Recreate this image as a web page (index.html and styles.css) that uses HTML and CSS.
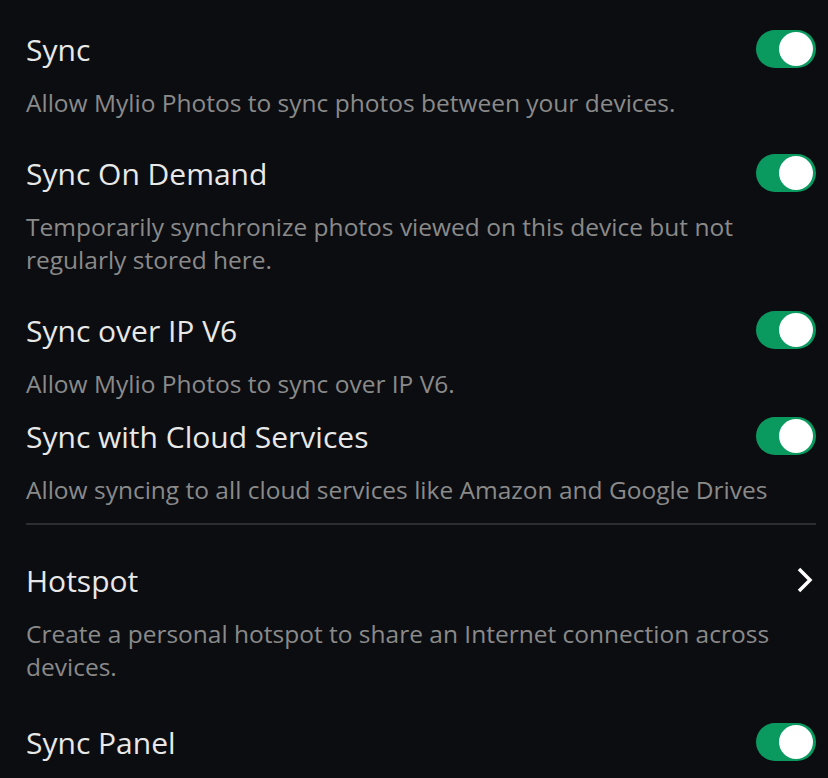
FILE: index.html
```html
<!DOCTYPE html>
<html>
    <head>
        <title>Sync Settings</title>
        <link rel="stylesheet" href="styles.css">
    </head>
    <body>
        <div class="settings">
            <div class="setting">
                <div class="setting-row">
                    <span class="setting-title">Sync</span>
                    <span class="toggle on"><span class="knob"></span></span>
                </div>
                <p class="setting-desc">Allow Mylio Photos to sync photos between your devices.</p>
            </div>

            <div class="setting">
                <div class="setting-row">
                    <span class="setting-title">Sync On Demand</span>
                    <span class="toggle on"><span class="knob"></span></span>
                </div>
                <p class="setting-desc">Temporarily synchronize photos viewed on this device but not regularly stored here.</p>
            </div>

            <div class="setting tight">
                <div class="setting-row">
                    <span class="setting-title">Sync over IP V6</span>
                    <span class="toggle on"><span class="knob"></span></span>
                </div>
                <p class="setting-desc">Allow Mylio Photos to sync over IP V6.</p>
            </div>

            <div class="setting tight">
                <div class="setting-row">
                    <span class="setting-title">Sync with Cloud Services</span>
                    <span class="toggle on"><span class="knob"></span></span>
                </div>
                <p class="setting-desc">Allow syncing to all cloud services like Amazon and Google Drives</p>
            </div>

            <hr class="divider" />

            <div class="setting loose">
                <div class="setting-row">
                    <span class="setting-title">Hotspot</span>
                    <svg class="chevron" width="18" height="26" viewBox="0 0 18 26">
                        <polyline points="3,2 14,13 3,24" fill="none" stroke="#ffffff" stroke-width="3.5" />
                    </svg>
                </div>
                <p class="setting-desc">Create a personal hotspot to share an Internet connection across devices.</p>
            </div>

            <div class="setting">
                <div class="setting-row">
                    <span class="setting-title">Sync Panel</span>
                    <span class="toggle on"><span class="knob"></span></span>
                </div>
            </div>
        </div>
    </body>
</html>
```

FILE: styles.css
```css
body {
    margin: 0;
    background-color: #0c0d10;
    font-family: 'Open Sans', sans-serif;
}
.settings {
    padding: 30px 12px 0 26px;
}
.setting {
    margin-bottom: 35px;
}
.setting.tight {
    margin-bottom: 17px;
}
.setting.loose {
    margin-bottom: 40px;
}
.setting-row {
    display: flex;
    align-items: center;
    justify-content: space-between;
    height: 38px;
}
.setting-title {
    color: #e8e8e8;
    font-size: 30px;
    font-weight: 400;
}
.setting-desc {
    margin: 18px 30px 0 0;
    color: #8a8a8a;
    font-size: 24.5px;
    line-height: 33px;
}
.toggle {
    position: relative;
    width: 60px;
    height: 38px;
    border-radius: 19px;
    background-color: #3a3b3f;
}
.toggle.on {
    background-color: #0a9a60;
}
.knob {
    position: absolute;
    top: 2px;
    left: 2px;
    width: 34px;
    height: 34px;
    border-radius: 50%;
    background-color: #ffffff;
}
.toggle.on .knob {
    left: 23px;
}
.chevron {
    margin-right: 2px;
}
.divider {
    margin: 0 0 36px 0;
    border: none;
    border-top: 2px solid #2c2d31;
}
```
